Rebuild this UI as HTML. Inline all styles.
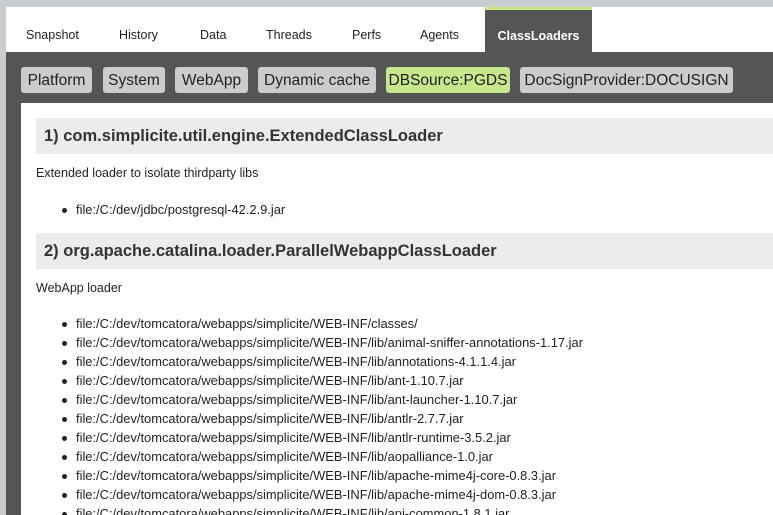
<!DOCTYPE html>
<html><head><meta charset="utf-8"><style>
*{margin:0;padding:0;box-sizing:border-box}
html,body{width:773px;height:515px;overflow:hidden}
body{background:#c8cdd0;font-family:"Liberation Sans",sans-serif;color:#222;position:relative}
.main{position:absolute;left:6px;top:7px;right:0;bottom:0;background:#555}
.tabs{position:absolute;left:6px;top:7px;right:0;height:45px;background:#fff}
.tab{position:absolute;top:21px;font-size:12.5px;color:#222}
.active{position:absolute;left:485px;top:7px;width:107px;height:45px;background:#555;border-top:3px solid #c8e68a;color:#fff;font-weight:bold;font-size:12.5px;text-align:center;padding-top:19px}
.btn{position:absolute;top:67px;height:26px;background:#ccc;border-radius:3px;font-size:15.5px;color:#222;line-height:27px;text-align:center}
.content{position:absolute;left:21px;top:103px;right:0;bottom:0;background:#fff}
h2{position:absolute;left:15px;right:0;height:36px;background:#ececec;font-size:16.5px;font-weight:bold;color:#333;line-height:37px;padding-left:8px}
.p{position:absolute;left:15px;font-size:12.5px}
ul{position:absolute;left:55px;list-style:none;font-size:12.9px;white-space:nowrap}
li{height:19px;line-height:19px;position:relative}
li:before{content:"";position:absolute;left:-14px;top:8px;width:5px;height:5px;border-radius:50%;background:#222}
</style></head><body>
<div class="main"></div>
<div class="tabs"></div>
<div class="tab" style="left:26px;top:28px">Snapshot</div>
<div class="tab" style="left:119px;top:28px">History</div>
<div class="tab" style="left:200px;top:28px">Data</div>
<div class="tab" style="left:266px;top:28px">Threads</div>
<div class="tab" style="left:352px;top:28px">Perfs</div>
<div class="tab" style="left:420px;top:28px">Agents</div>
<div class="active">ClassLoaders</div>
<div class="btn" style="left:21px;width:71px">Platform</div>
<div class="btn" style="left:103px;width:62px">System</div>
<div class="btn" style="left:175px;width:73px">WebApp</div>
<div class="btn" style="left:258px;width:118px">Dynamic cache</div>
<div class="btn" style="left:386px;width:124px;background:#c8e68a">DBSource:PGDS</div>
<div class="btn" style="left:520px;width:213px">DocSignProvider:DOCUSIGN</div>
<div class="content">
<h2 style="top:15px">1) com.simplicite.util.engine.ExtendedClassLoader</h2>
<div class="p" style="top:63px">Extended loader to isolate thirdparty libs</div>
<ul style="top:97px"><li>file:/C:/dev/jdbc/postgresql-42.2.9.jar</li></ul>
<h2 style="top:130px">2) org.apache.catalina.loader.ParallelWebappClassLoader</h2>
<div class="p" style="top:178px">WebApp loader</div>
<ul style="top:211px">
<li>file:/C:/dev/tomcatora/webapps/simplicite/WEB-INF/classes/</li>
<li>file:/C:/dev/tomcatora/webapps/simplicite/WEB-INF/lib/animal-sniffer-annotations-1.17.jar</li>
<li>file:/C:/dev/tomcatora/webapps/simplicite/WEB-INF/lib/annotations-4.1.1.4.jar</li>
<li>file:/C:/dev/tomcatora/webapps/simplicite/WEB-INF/lib/ant-1.10.7.jar</li>
<li>file:/C:/dev/tomcatora/webapps/simplicite/WEB-INF/lib/ant-launcher-1.10.7.jar</li>
<li>file:/C:/dev/tomcatora/webapps/simplicite/WEB-INF/lib/antlr-2.7.7.jar</li>
<li>file:/C:/dev/tomcatora/webapps/simplicite/WEB-INF/lib/antlr-runtime-3.5.2.jar</li>
<li>file:/C:/dev/tomcatora/webapps/simplicite/WEB-INF/lib/aopalliance-1.0.jar</li>
<li>file:/C:/dev/tomcatora/webapps/simplicite/WEB-INF/lib/apache-mime4j-core-0.8.3.jar</li>
<li>file:/C:/dev/tomcatora/webapps/simplicite/WEB-INF/lib/apache-mime4j-dom-0.8.3.jar</li>
<li>file:/C:/dev/tomcatora/webapps/simplicite/WEB-INF/lib/api-common-1.8.1.jar</li>
</ul>
</div>
</body></html>
